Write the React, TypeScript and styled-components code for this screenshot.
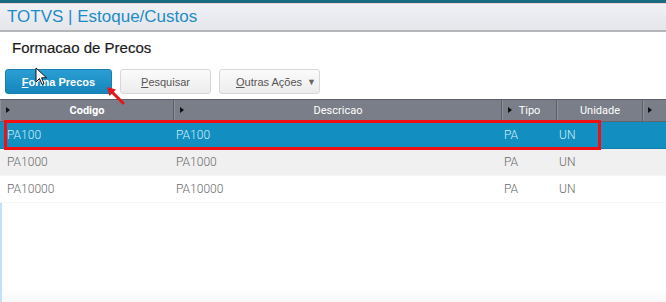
import styled, { createGlobalStyle } from 'styled-components';

interface Iproduct {
  codigo: string;
  descricao: string;
  tipo: string;
  unidade: string;
}

const products: Iproduct[] = [
  { codigo: 'PA100', descricao: 'PA100', tipo: 'PA', unidade: 'UN' },
  { codigo: 'PA1000', descricao: 'PA1000', tipo: 'PA', unidade: 'UN' },
  { codigo: 'PA10000', descricao: 'PA10000', tipo: 'PA', unidade: 'UN' },
];

const GlobalStyle = createGlobalStyle`
  html, body {
    margin: 0;
    padding: 0;
    background: #fff;
  }

  body {
    width: 666px;
    height: 302px;
    overflow: hidden;
    font-family: "Liberation Sans", Arial, sans-serif;
  }
`;

const App = () => {
  return (
    <Page>
      <GlobalStyle />
      <TopLine />
      <TitleBar>TOTVS | Estoque/Custos</TitleBar>

      <Content>
        <PageTitle>Formacao de Precos</PageTitle>

        <Toolbar>
          <Button primary>
            <u>F</u>orma Precos
          </Button>
          <Button>
            <u>P</u>esquisar
          </Button>
          <Button wide>
            <u>O</u>utras Ações
            <Caret>▼</Caret>
          </Button>
        </Toolbar>

        <Grid>
          <HeaderRow>
            <HeaderCell arrow bold>Codigo</HeaderCell>
            <HeaderCell arrow>Descricao</HeaderCell>
            <HeaderCell arrow>Tipo</HeaderCell>
            <HeaderCell>Unidade</HeaderCell>
            <HeaderCell arrow last />
          </HeaderRow>

          {products.map((p, idx) => (
            <Row key={p.codigo} selected={idx === 0} striped={idx === 1}>
              <Cell>{p.codigo}</Cell>
              <Cell>{p.descricao}</Cell>
              <Cell>{p.tipo}</Cell>
              <Cell>{p.unidade}</Cell>
              <Cell />
            </Row>
          ))}

          <Filler />
          <Highlight />
        </Grid>
      </Content>

      {/* cursor do mouse */}
      <Pointer width="14" height="20" viewBox="0 0 14 20">
        <path d="M1 1 L1 15 L4.5 11.5 L7 17.5 L9 16.6 L6.6 10.8 L11.5 10.8 Z" fill="#fff" stroke="#111" strokeWidth="1" strokeLinejoin="round" />
      </Pointer>

      {/* seta vermelha */}
      <RedArrow width="20" height="20" viewBox="0 0 20 20">
        <path d="M17 17 L6 6" stroke="#e8141b" strokeWidth="3" strokeLinecap="round" />
        <path d="M1 1 L10 3.5 L3.5 10 Z" fill="#e8141b" />
      </RedArrow>
    </Page>
  );
};

export default App;

const Page = styled.div`
  position: relative;
  display: flex;
  flex-direction: column;
  width: 666px;
  height: 302px;
  background: #fff;
  overflow: hidden;
`;

const TopLine = styled.div`
  height: 3px;
  background: #1b6b80;
  border-bottom: 1px solid #f2d2d2;
`;

const TitleBar = styled.div`
  height: 26px;
  padding-left: 7px;
  background: linear-gradient(#f1f1f8, #e4e6ea);
  border-bottom: 2px solid #b4b6ba;

  font-size: 17px;
  line-height: 25px;
  color: #1e8cc4;
`;

const Content = styled.div`
  display: flex;
  flex-direction: column;
  flex: 1;
  padding-top: 7px;
`;

const PageTitle = styled.div`
  padding-left: 12px;
  font-size: 15px;
  line-height: 18px;
  color: #1c1c1c;
  -webkit-text-stroke: 0.2px #1c1c1c;
`;

const Toolbar = styled.div`
  display: flex;
  gap: 8px;
  margin: 12px 0 5px 5px;
`;

const Button = styled.div<{ primary?: boolean; wide?: boolean }>`
  position: relative;
  display: flex;
  align-items: center;
  justify-content: ${props => (props.wide ? 'flex-start' : 'center')};

  width: ${props => (props.primary ? '107px' : props.wide ? '101px' : '91px')};
  height: 25px;
  padding-left: ${props => (props.wide ? '16px' : '0')};
  box-sizing: border-box;

  font-size: 11px;
  font-weight: ${props => (props.primary ? 700 : 400)};
  color: ${props => (props.primary ? '#fff' : '#555')};

  border: 1px solid ${props => (props.primary ? '#1a7fae' : '#d7d7d7')};
  border-radius: 3px;
  background: ${props =>
    props.primary
      ? 'linear-gradient(#2a9fd3, #1585bb)'
      : 'linear-gradient(#fbfbfb, #ececec)'};

  u {
    text-decoration: underline;
  }
`;

const Caret = styled.span`
  position: absolute;
  right: 3px;
  top: 7px;
  font-size: 9px;
  color: #666;
`;

const Grid = styled.div`
  position: relative;
  display: flex;
  flex-direction: column;
  flex: 1;
`;

const columns = '174px 328px 55px 86px 1fr';

const HeaderRow = styled.div`
  display: grid;
  grid-template-columns: ${columns};
  height: 21px;
  background: #7a7e88;
  border-top: 1px solid #5d6068;
  border-bottom: 1px solid #60636b;
`;

const HeaderCell = styled.div<{ arrow?: boolean; bold?: boolean; last?: boolean }>`
  position: relative;
  display: flex;
  align-items: center;
  justify-content: center;

  font-family: Roboto, "Liberation Sans", sans-serif;
  font-size: 11px;
  font-weight: ${props => (props.bold ? 700 : 400)};
  color: #fff;

  border-right: ${props => (props.last ? 'none' : '1px solid #5b5e66')};
  border-left: 1px solid #8d919a;

  &::before {
    content: ${props => (props.arrow ? "''" : 'none')};
    position: absolute;
    left: ${props => (props.last ? '4px' : '5px')};
    top: 7px;
    border-left: 4px solid #111;
    border-top: 3px solid transparent;
    border-bottom: 3px solid transparent;
  }
`;

const Row = styled.div<{ selected?: boolean; striped?: boolean }>`
  display: grid;
  grid-template-columns: ${columns};
  height: 26px;
  align-items: center;

  font-family: Roboto, "Liberation Sans", sans-serif;
  font-size: 12px;
  font-weight: 300;
  color: ${props => (props.selected ? '#d6eefa' : '#6a6a6a')};
  background: ${props => (props.selected ? '#128fc0' : props.striped ? '#f0f0f0' : '#fff')};
  border-bottom: 1px solid ${props => (props.selected ? '#0f7fab' : '#f6f6f6')};
`;

const Cell = styled.div`
  padding-left: 2px;
  white-space: nowrap;

  &:first-child {
    padding-left: 7px;
  }
`;

const Filler = styled.div`
  flex: 1;
  border-left: 2px solid #bfe2f4;
  background: linear-gradient(#fff 85%, #f8f8f8);
`;

const Highlight = styled.div`
  position: absolute;
  left: 4px;
  top: 21px;
  width: 597px;
  height: 30px;
  box-sizing: border-box;
  border: 3px solid #f20f14;
  pointer-events: none;
`;

const Pointer = styled.svg`
  position: absolute;
  left: 35px;
  top: 67px;
`;

const RedArrow = styled.svg`
  position: absolute;
  left: 106px;
  top: 86px;
`;
